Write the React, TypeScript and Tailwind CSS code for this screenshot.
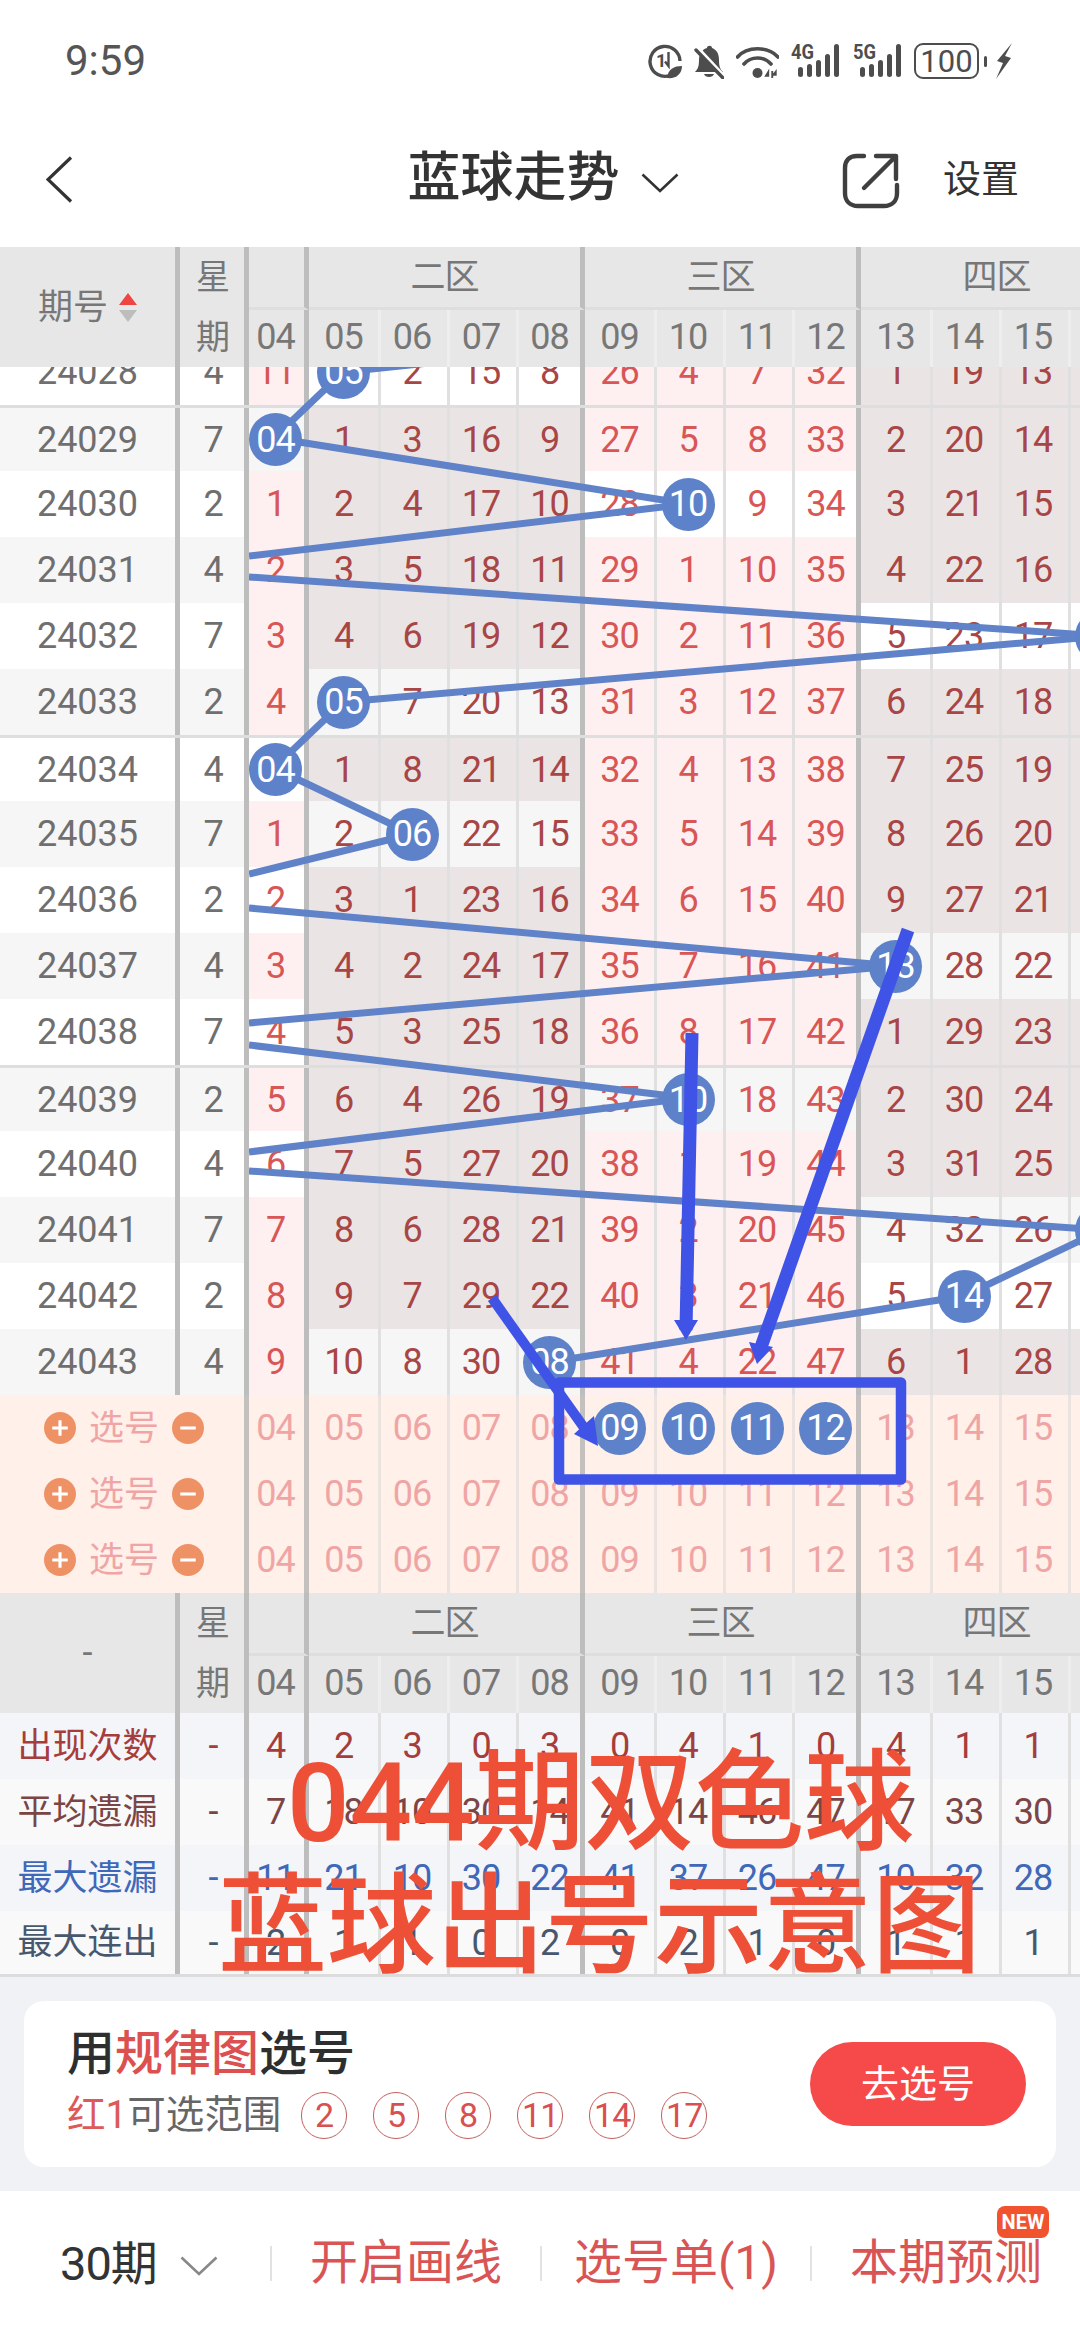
import React from "react";

type Kind = "a" | "f" | "m" | "l";
const kinds: Kind[] = ["a", "f", "m", "m", "l", "f", "m", "m", "l", "f", "m", "m", "l"];
const labels = ["04", "05", "06", "07", "08", "09", "10", "11", "12", "13", "14", "15", "16"];

const shape: Record<Kind, string> = {
  a: "w-[60px] border-r-[5px] pr-[2px] border-[#bdbdbd]",
  f: "w-[72px] border-r-[3px] border-[#e0e0e0]",
  m: "w-[69px] border-r-[3px] pr-[4px] border-[#e0e0e0]",
  l: "w-[66px] border-r-[5px] border-[#bdbdbd]",
};

const rows: { id: number; wk: number; v: (number | string)[] }[] = [
  { id: 24028, wk: 4, v: [11, "05", 2, 15, 8, 26, 4, 7, 32, 1, 19, 13, 7] },
  { id: 24029, wk: 7, v: ["04", 1, 3, 16, 9, 27, 5, 8, 33, 2, 20, 14, 8] },
  { id: 24030, wk: 2, v: [1, 2, 4, 17, 10, 28, "10", 9, 34, 3, 21, 15, 9] },
  { id: 24031, wk: 4, v: [2, 3, 5, 18, 11, 29, 1, 10, 35, 4, 22, 16, 10] },
  { id: 24032, wk: 7, v: [3, 4, 6, 19, 12, 30, 2, 11, 36, 5, 23, 17, "16"] },
  { id: 24033, wk: 2, v: [4, "05", 7, 20, 13, 31, 3, 12, 37, 6, 24, 18, 1] },
  { id: 24034, wk: 4, v: ["04", 1, 8, 21, 14, 32, 4, 13, 38, 7, 25, 19, 2] },
  { id: 24035, wk: 7, v: [1, 2, "06", 22, 15, 33, 5, 14, 39, 8, 26, 20, 3] },
  { id: 24036, wk: 2, v: [2, 3, 1, 23, 16, 34, 6, 15, 40, 9, 27, 21, 4] },
  { id: 24037, wk: 4, v: [3, 4, 2, 24, 17, 35, 7, 16, 41, "13", 28, 22, 5] },
  { id: 24038, wk: 7, v: [4, 5, 3, 25, 18, 36, 8, 17, 42, 1, 29, 23, 6] },
  { id: 24039, wk: 2, v: [5, 6, 4, 26, 19, 37, "10", 18, 43, 2, 30, 24, 7] },
  { id: 24040, wk: 4, v: [6, 7, 5, 27, 20, 38, 1, 19, 44, 3, 31, 25, 8] },
  { id: 24041, wk: 7, v: [7, 8, 6, 28, 21, 39, 2, 20, 45, 4, 32, 26, "16"] },
  { id: 24042, wk: 2, v: [8, 9, 7, 29, 22, 40, 3, 21, 46, 5, "14", 27, 1] },
  { id: 24043, wk: 4, v: [9, 10, 8, 30, "08", 41, 4, 22, 47, 6, 1, 28, 2] },
];

const tints = ["p-pppp-p-p-p-ppp", "-dddd-d-ddddddd-", "pp-pppppppp-pppp", "dddd-dddd-ddd--d"];
const groupOf = [0, 1, 1, 1, 1, 2, 2, 2, 2, 3, 3, 3, 3];

const Ball = ({ t }: { t: string }) => (
  <div className="relative z-20 w-[53px] h-[53px] shrink-0 rounded-full bg-[#5d82c9] text-white flex items-center justify-center">
    {t}
  </div>
);

function Header({ first }: { first: React.ReactNode }) {
  const title = "h-[63px] flex items-center justify-center border-b-[3px] border-b-[#dedede] border-r-[5px] border-r-[#bdbdbd] text-[35px]";
  const sub = (from: number, to: number) => (
    <div className="flex h-[57px]">
      {labels.slice(from, to).map((l, i) => (
        <div key={l} className={`${shape[kinds[from + i]]} ${kinds[from + i] === "a" || kinds[from + i] === "l" ? "" : "border-[#eeeeee]"} shrink-0 pb-[3px] flex items-center justify-center`}>
          {l}
        </div>
      ))}
    </div>
  );
  return (
    <div className="flex h-[120px] bg-[#e7e7e7] text-[#777777] text-[36px] tracking-[-1px] overflow-hidden relative z-30">
      <div className="w-[180px] shrink-0 border-r-[5px] border-[#bdbdbd] flex items-center justify-center tracking-normal">{first}</div>
      <div className="w-[69px] shrink-0 border-r-[5px] pl-[2px] border-[#bdbdbd] flex flex-col items-center text-[34px] tracking-normal">
        <div className="h-[60px] flex items-center">星</div>
        <div className="h-[60px] flex items-center">期</div>
      </div>
      <div className="w-[60px] shrink-0 flex flex-col">
        <div className={title}></div>
        {sub(0, 1)}
      </div>
      <div className="w-[276px] shrink-0 flex flex-col">
        <div className={title}>二区</div>
        {sub(1, 5)}
      </div>
      <div className="w-[276px] shrink-0 flex flex-col">
        <div className={title}>三区</div>
        {sub(5, 9)}
      </div>
      <div className="w-[276px] shrink-0 flex flex-col">
        <div className={title}>四区</div>
        {sub(9, 13)}
      </div>
    </div>
  );
}

function TrendRow({ r, idx }: { r: (typeof rows)[number]; idx: number }) {
  const base = idx % 2 === 0 ? "bg-white" : "bg-[#f6f6f6]";
  const line = idx === 1 || idx === 6 || idx === 11 ? "border-t-[3px] border-[#dedede]" : "";
  return (
    <div className={`flex h-[66px] shrink-0 text-[36px] tracking-[-1px] ${line}`}>
      <div className={`w-[180px] shrink-0 border-r-[5px] border-[#bdbdbd] flex items-center justify-center text-[#6f6f6f] tracking-normal ${base}`}>{r.id}</div>
      <div className={`w-[69px] shrink-0 border-r-[5px] pl-[2px] border-[#bdbdbd] flex items-center justify-center text-[#6f6f6f] ${base}`}>{r.wk}</div>
      {r.v.map((v, i) => {
        const g = groupOf[i];
        const t = tints[g][idx];
        const bg = t === "p" ? "bg-[#fef0f0]" : t === "d" ? "bg-[#ebe4e5]" : base;
        const color = g === 0 || g === 2 ? "text-[#d85656]" : "text-[#a84545]";
        return (
          <div key={i} className={`${shape[kinds[i]]} ${bg} ${color} shrink-0 flex items-center justify-center`}>
            {typeof v === "string" ? <Ball t={v} /> : v}
          </div>
        );
      })}
    </div>
  );
}

function SelectRow({ balls }: { balls: boolean }) {
  return (
    <div className="flex h-[66px] bg-[#fff0ea] text-[36px] tracking-[-1px] text-[#f0a5a5]">
      <div className="w-[249px] shrink-0 border-r-[5px] border-[#c4c0be] pl-[44px] flex items-center">
        <svg width="32" height="32" viewBox="0 0 31 31" className="shrink-0">
          <circle cx="15.5" cy="15.5" r="15.5" fill="#ee9266" />
          <path d="M8 15.5H23M15.5 8V23" stroke="#fff" strokeWidth="3" />
        </svg>
        <span className="ml-[13px] w-[70px] text-[35px] tracking-normal">选号</span>
        <svg width="32" height="32" viewBox="0 0 31 31" className="ml-[13px] shrink-0">
          <circle cx="15.5" cy="15.5" r="15.5" fill="#ee9266" />
          <path d="M8 15.5H23" stroke="#fff" strokeWidth="3" />
        </svg>
      </div>
      {labels.map((l, i) => (
        <React.Fragment key={l}>
          {i === 0 ? (
            <div className="w-[60px] shrink-0 border-r-[5px] pr-[2px] border-[#c4c0be] flex items-center justify-center">{l}</div>
          ) : (
            <div className={`${shape[kinds[i]]} ${kinds[i] === "l" ? "border-[#c4c0be]" : "border-[#ebe3df]"} shrink-0 flex items-center justify-center`}>
              {balls && i >= 5 && i <= 8 ? <Ball t={l} /> : l}
            </div>
          )}
        </React.Fragment>
      ))}
    </div>
  );
}

const stats = [
  { name: "出现次数", cls: "text-[#a53d3d]", bg: "bg-[#f4f5f9]", v: [4, 2, 3, 0, 3, 0, 4, 1, 0, 4, 1, 1, 2] },
  { name: "平均遗漏", cls: "text-[#7c4545]", bg: "bg-[#f9f9f9]", v: [7, 18, 10, 30, 14, 41, 14, 46, 47, 17, 33, 30, 9] },
  { name: "最大遗漏", cls: "text-[#3f68b8]", bg: "bg-[#f4f5f9]", v: [11, 21, 10, 30, 22, 41, 37, 26, 47, 10, 32, 28, 11] },
  { name: "最大连出", cls: "text-[#47586e]", bg: "bg-[#f9f9f9]", v: [2, 1, 1, 0, 2, 0, 2, 1, 0, 1, 1, 1, 2] },
];

const blueLines = [
  [343, 372, 620, 343],
  [343, 372, 274, 438],
  [274, 438, 688, 504],
  [688, 504, 249, 556],
  [249, 577, 1102, 636],
  [1102, 636, 343, 702],
  [343, 702, 274, 768],
  [274, 768, 412, 834],
  [412, 834, 249, 874],
  [249, 908, 895, 966],
  [895, 966, 249, 1023],
  [249, 1045, 688, 1098],
  [688, 1098, 249, 1152],
  [249, 1171, 1102, 1230],
  [1102, 1230, 964, 1296],
  [964, 1296, 550, 1362],
];

const Signal = ({ label }: { label: string }) => (
  <svg width="50" height="36" viewBox="0 0 50 36" fill="#4d4d4d" className="shrink-0">
    <text x="0" y="16" fontSize="20" fontWeight="700" fontFamily="Roboto, sans-serif" textLength="23" lengthAdjust="spacingAndGlyphs">{label}</text>
    <rect x="7" y="24" width="5" height="10" rx="2.5" />
    <rect x="16" y="21" width="5" height="13" rx="2.5" />
    <rect x="25" y="17" width="5" height="17" rx="2.5" />
    <rect x="34" y="11" width="5" height="23" rx="2.5" />
    <rect x="43" y="1" width="5" height="33" rx="2.5" />
  </svg>
);

function StatusIcons() {
  return (
    <div className="flex items-center gap-[12px]">
      <svg width="34" height="36" viewBox="0 0 34 36" className="shrink-0">
        <path d="M22 32.5A15 15 0 1 1 32 18" fill="none" stroke="#4d4d4d" strokeWidth="3.4" />
        <text x="8" y="24" fontSize="18" fontWeight="700" fill="#4d4d4d" fontFamily="Roboto, sans-serif">1</text>
        <path d="M20.5 9V23M17 18.5L20.5 23V18.5" fill="none" stroke="#4d4d4d" strokeWidth="2.4" />
        <path d="M19 35C20 26 26 23 34 23C34 31 28 36 19 35Z" fill="#4d4d4d" />
      </svg>
      <svg width="30" height="36" viewBox="0 0 30 36" className="shrink-0">
        <path d="M1 29C4 26 5 23 5 17C5 10 9 6 13 5C13 2 18 2 18 5C23 7 25 11 25 17C25 23 26 26 29 29Z" fill="#4d4d4d" />
        <path d="M10 31H20C19 35 11 35 10 31Z" fill="#4d4d4d" />
        <path d="M0 2L29 33" stroke="#ffffff" strokeWidth="5" />
        <path d="M2 7L29 35" stroke="#4d4d4d" strokeWidth="3.4" strokeLinecap="round" />
      </svg>
      <svg width="43" height="36" viewBox="0 0 43 36" fill="none" stroke="#4d4d4d" className="shrink-0">
        <path d="M1.5 14C11 3 32 3 42 14" strokeWidth="3.6" strokeLinecap="round" />
        <path d="M8 21C15 13 28 13 35 21" strokeWidth="3.6" strokeLinecap="round" />
        <circle cx="21.5" cy="30" r="5" fill="#4d4d4d" stroke="none" />
        <path d="M32.5 28L29.5 33H32.5ZM36 28V35M36.5 28V35M37 32L40 28V32Z" fill="#4d4d4d" strokeWidth="1.4" />
      </svg>
      <Signal label="4G" />
      <Signal label="5G" />
      <div className="flex items-center gap-[5px] shrink-0 -ml-[1px]">
        <div className="w-[65px] h-[36px] rounded-[9px] border-[2.5px] border-[#4d4d4d] flex items-center justify-center text-[#4d4d4d] text-[31px] tracking-[0px] leading-none">100</div>
        <div className="w-[3px] h-[11px] bg-[#4d4d4d] rounded-full"></div>
      </div>
      <svg width="16" height="36" viewBox="0 0 16 36" fill="#4d4d4d" className="shrink-0 -ml-[3px]">
        <path d="M16 0L1 18L7 20L0 36L15 15L9 13Z" />
      </svg>
    </div>
  );
}

export default function App() {
  return (
    <div className="relative w-[1080px] h-[2340px] overflow-hidden bg-white flex flex-col [font-family:Roboto,'Noto_Sans_CJK_SC',sans-serif] leading-none">
      <div className="h-[110px] shrink-0 flex items-center justify-between pl-[65px] pr-[68px] pt-[12px] text-[#555555]">
        <span className="text-[42px]">9:59</span>
        <StatusIcons />
      </div>

      <div className="h-[137px] shrink-0 relative flex items-center justify-center">
        <div className="flex items-center ml-[6px]">
          <span className="text-[53px] font-medium text-[#333333]">蓝球走势</span>
          <svg width="38" height="20" viewBox="0 0 38 20" fill="none" stroke="#333333" strokeWidth="2.6" className="ml-[21px] mt-[8px]">
            <path d="M1.5 1.5L19 18L36.5 1.5" />
          </svg>
        </div>
        <svg width="27" height="47" viewBox="0 0 27 47" fill="none" stroke="#333333" strokeWidth="3.2" className="absolute left-[46px] top-[46px]">
          <path d="M25 1.5L2 23.5L25 45.5" />
        </svg>
        <svg width="60" height="58" viewBox="0 0 60 58" fill="none" stroke="#3f3f3f" strokeWidth="4.4" strokeLinecap="round" strokeLinejoin="round" className="absolute left-[841px] top-[42px]">
          <path d="M23 4H16C8 4 4 9 4 16V41C4 49 9 54 17 54H43C51 54 56 49 56 41V33" />
          <path d="M23 36L55 4M35 4H55V27" />
        </svg>
        <span className="absolute left-[943px] top-[50px] text-[38px] text-[#333333]">设置</span>
      </div>

      <Header
        first={
          <div className="flex items-center gap-[11px]">
            <span className="text-[35px]">期号</span>
            <div className="flex flex-col gap-[5px]">
              <div className="w-0 h-0 border-x-[9px] border-x-transparent border-b-[12px] border-b-[#ee4444]"></div>
              <div className="w-0 h-0 border-x-[9px] border-x-transparent border-t-[12px] border-t-[#bdbdbd]"></div>
            </div>
          </div>
        }
      />

      <div className="relative h-[1028px] shrink-0 overflow-hidden">
        <div className="-mt-[28px]">
          {rows.map((r, i) => (
            <TrendRow key={r.id} r={r} idx={i} />
          ))}
        </div>
        <svg
          className="absolute left-[249px] top-0 z-10"
          width="831"
          height="1028"
          viewBox="249 367 831 1028"
          stroke="#5f82c8"
          strokeWidth="7"
        >
          {blueLines.map((l, i) => (
            <line key={i} x1={l[0]} y1={l[1]} x2={l[2]} y2={l[3]} />
          ))}
        </svg>
      </div>

      <SelectRow balls />
      <SelectRow balls={false} />
      <SelectRow balls={false} />

      <Header first={<span className="text-[36px]">-</span>} />

      {stats.map((s, n) => (
        <div key={s.name} className={`flex h-[66px] shrink-0 text-[36px] tracking-[-1px] ${s.cls} ${s.bg} ${n === 3 ? "border-b-[3px] border-[#dcdcdc]" : ""}`}>
          <div className="w-[180px] shrink-0 border-r-[5px] border-[#bdbdbd] flex items-center justify-center text-[35px] tracking-normal">{s.name}</div>
          <div className="w-[69px] shrink-0 border-r-[5px] pl-[2px] border-[#bdbdbd] flex items-center justify-center">-</div>
          {s.v.map((v, i) => (
            <div key={i} className={`${shape[kinds[i]]} shrink-0 flex items-center justify-center`}>{v}</div>
          ))}
        </div>
      ))}

      <div className="h-[214px] shrink-0 bg-[#f1f2f5] px-[24px] pt-[24px]">
        <div className="h-[166px] bg-white rounded-[20px] pl-[43px] pr-[30px] flex items-center justify-between">
          <div className="flex flex-col">
            <div className="text-[48px] font-medium text-[#2e2e2e]">
              用<span className="text-[#dc5050]">规律图</span>选号
            </div>
            <div className="flex items-center mt-[14px] text-[38.5px] text-[#666666]">
              <span className="text-[#dc5a5a]">红1</span>
              <span>可选范围</span>
              <div className="flex gap-[26px] ml-[20px]">
                {[2, 5, 8, 11, 14, 17].map((n) => (
                  <div key={n} className="w-[46px] h-[47px] rounded-full border-[1.5px] border-[#c4605c] flex items-center justify-center text-[#d85050] text-[34px] tracking-[-1px]">
                    {n}
                  </div>
                ))}
              </div>
            </div>
          </div>
          <div className="w-[216px] h-[84px] rounded-full bg-[#f64a4a] text-white text-[38px] flex items-center justify-center">去选号</div>
        </div>
      </div>

      <div className="relative flex-1 flex items-center bg-white pb-[5px] text-[48px] text-[#d95555]">
        <div className="w-[270px] shrink-0 flex items-center pl-[60px] text-[#333333]">
          <span className="text-[47px] tracking-[-1px]">30期</span>
          <svg width="38" height="20" viewBox="0 0 38 20" fill="none" stroke="#888888" strokeWidth="2.6" className="ml-[23px] mt-[6px]">
            <path d="M1.5 1.5L19 18L36.5 1.5" />
          </svg>
        </div>
        <div className="w-[270px] shrink-0 h-[35px] flex items-center justify-center border-l-[2px] border-[#e2e2e2]">开启画线</div>
        <div className="w-[270px] shrink-0 h-[35px] flex items-center justify-center border-l-[2px] border-[#e2e2e2]">选号单(1)</div>
        <div className="w-[270px] shrink-0 h-[35px] flex items-center justify-center border-l-[2px] border-[#e2e2e2]">本期预测</div>
        <div className="absolute left-[997px] top-[15px] w-[52px] h-[32px] rounded-[8px] bg-[#f2532f] text-white text-[20px] font-bold flex items-center justify-center">NEW</div>
      </div>

      <svg className="absolute left-0 top-0 z-40 pointer-events-none" width="1080" height="2340" viewBox="0 0 1080 2340">
        <path d="M559 1382.5H901V1479.5H559Z" fill="none" stroke="#3f53e6" strokeWidth="10.5" strokeLinejoin="round" />
        <g stroke="#3f53e6" fill="#3f53e6">
          <line x1="492" y1="1298" x2="590" y2="1436" strokeWidth="10" />
          <polygon points="598,1446 574,1434 594,1416" strokeWidth="0" />
          <line x1="692" y1="1033" x2="686" y2="1330" strokeWidth="13" />
          <polygon points="686,1340 674,1320 698,1320" strokeWidth="0" />
          <line x1="908" y1="930" x2="760" y2="1350" strokeWidth="13" />
          <polygon points="757,1364 749,1342 773,1347" strokeWidth="0" />
        </g>
      </svg>

      <div className="absolute left-[287px] top-[1749px] z-50 text-[110px] font-medium text-[#ee4f37] whitespace-nowrap">044期双色球</div>
      <div className="absolute left-[218px] top-[1873px] z-50 text-[109px] font-medium text-[#ee4f37] whitespace-nowrap">蓝球出号示意图</div>
    </div>
  );
}
